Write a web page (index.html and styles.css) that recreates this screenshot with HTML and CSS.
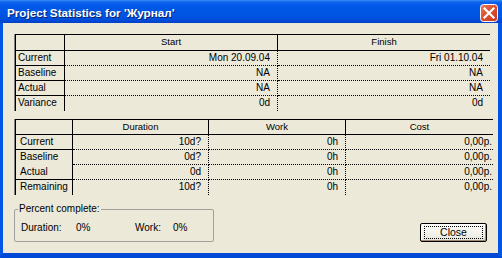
FILE: index.html
```html
<!DOCTYPE html>
<html>
<head>
<meta charset="utf-8">
<link rel="stylesheet" href="styles.css">
</head>
<body>
<div class="window">
  <div class="titlebar">
    <span class="title">Project Statistics for 'Журнал'</span>
    <span class="close">
      <svg width="18" height="18" viewBox="0 0 18 18">
        <defs>
          <linearGradient id="cg" x1="0" y1="0" x2="1" y2="1">
            <stop offset="0" stop-color="#e97a5c"/>
            <stop offset="0.5" stop-color="#df4d2c"/>
            <stop offset="1" stop-color="#c8381c"/>
          </linearGradient>
        </defs>
        <rect x="0.5" y="0.5" width="17" height="17" rx="3" fill="url(#cg)" stroke="#ffffff"/>
        <path d="M4.5 4.5 L13.5 13.5 M13.5 4.5 L4.5 13.5" stroke="#ffffff" stroke-width="2.2" stroke-linecap="square"/>
      </svg>
    </span>
  </div>
  <div class="body">
    <div class="grid t1">
      <div class="hd hsep"></div>
      <div class="hd hsep">Start</div>
      <div class="hd">Finish</div>

      <div class="lb sep">Current</div>
      <div class="v dr db">Mon 20.09.04</div>
      <div class="v db">Fri 01.10.04</div>

      <div class="lb sep">Baseline</div>
      <div class="v dr db">NA</div>
      <div class="v db">NA</div>

      <div class="lb sep">Actual</div>
      <div class="v dr db">NA</div>
      <div class="v db">NA</div>

      <div class="lb">Variance</div>
      <div class="v dr">0d</div>
      <div class="v">0d</div>
    </div>

    <div class="grid t2">
      <div class="hd hsep"></div>
      <div class="hd hsep">Duration</div>
      <div class="hd hsep">Work</div>
      <div class="hd">Cost</div>

      <div class="lb sep">Current</div>
      <div class="v dr db">10d?</div>
      <div class="v dr db">0h</div>
      <div class="v db vc">0,00р.</div>

      <div class="lb">Baseline</div>
      <div class="v dr db">0d?</div>
      <div class="v dr db">0h</div>
      <div class="v db vc">0,00р.</div>

      <div class="lb sep">Actual</div>
      <div class="v dr db">0d</div>
      <div class="v dr db">0h</div>
      <div class="v db vc">0,00р.</div>

      <div class="lb">Remaining</div>
      <div class="v dr">10d?</div>
      <div class="v dr">0h</div>
      <div class="v vc">0,00р.</div>
    </div>

    <div class="bottom">
      <fieldset class="group">
        <legend class="legend">Percent complete:</legend>
        <div class="pc">
          <span class="pc-l1">Duration:</span>
          <span class="pc-v1">0%</span>
          <span class="pc-l2">Work:</span>
          <span class="pc-v2">0%</span>
        </div>
      </fieldset>
      <div class="btn"><span class="btn-focus">Close</span></div>
    </div>
  </div>
</div>
</body>
</html>
```

FILE: styles.css
```css
* { box-sizing: border-box; }
html, body { margin: 0; padding: 0; }
body {
  width: 502px;
  height: 258px;
  overflow: hidden;
  background: #0055e5;
  font-family: "Liberation Sans", Arial, sans-serif;
  font-size: 10px;
  color: #000;
}
.window {
  width: 502px;
  height: 258px;
  display: flex;
  flex-direction: column;
}
.titlebar {
  height: 23px;
  flex: none;
  display: flex;
  align-items: center;
  justify-content: space-between;
  padding: 0 4px 0 7px;
  background: linear-gradient(#3c8ef5 0, #0f63ec 2px, #0058e8 6px, #0054e3 16px, #0049d6 21px, #003fc4 23px);
}
.title {
  color: #fff;
  font-weight: bold;
  font-size: 11.7px;
  text-shadow: 1px 1px 0 #0a246a;
  padding-top: 1px;
}
.close {
  width: 18px;
  height: 18px;
  display: block;
  margin-top: 3px;
}
.close svg { display: block; }
.body {
  flex: 1;
  background: #ece9d8;
  border-left: 3px solid #0055e5;
  border-right: 4px solid #0055e5;
  border-bottom: 5px solid #0049d6;
  padding: 11px 6px 0 12px;
  display: flex;
  flex-direction: column;
  align-items: flex-start;
}
.grid {
  display: grid;
  border-top: 1px solid #000;
  border-left: 1px solid #000;
  box-shadow: -1px 0 0 #808080;
}
.t1 {
  grid-template-columns: 49px 213px 212px;
  grid-template-rows: 16px repeat(4, 15px);
}
.t2 {
  margin-top: 8px;
  grid-template-columns: 57px 136px 137px 147px;
  grid-template-rows: 15px repeat(4, 15px);
}
.hd {
  border-bottom: 1px solid #000;
  font-size: 9.5px;
  text-align: center;
  line-height: 14px;
  white-space: nowrap;
}
.hsep { border-right: 1px solid #000; }
.lb {
  border-right: 1px solid #000;
  padding-left: 2px;
  line-height: 14px;
  white-space: nowrap;
  overflow: hidden;
}
.t2 .lb { padding-left: 4px; }
.sep { border-bottom: 1px solid #000; }
.v {
  text-align: right;
  padding-right: 7px;
  line-height: 14px;
  white-space: nowrap;
}
.vc { padding-right: 1px; }
.dr { border-right: 1px dotted #000; }
.db { border-bottom: 1px dotted #000; }
.bottom {
  align-self: stretch;
  display: flex;
  justify-content: space-between;
  align-items: flex-end;
  margin-top: 8px;
}
.group {
  margin: 0 0 0 -1px;
  width: 200px;
  height: 39px;
  border: 1px solid #a0a0a0;
  border-radius: 2px;
  padding: 0 0 0 6px;
}
.legend {
  padding: 0 1px;
  margin-left: -3px;
  line-height: 12px;
}
.pc {
  display: flex;
  padding-top: 6px;
  line-height: 13px;
}
.pc-l1 { width: 55px; }
.pc-v1 { width: 59px; }
.pc-l2 { width: 38px; }
.btn {
  width: 67px;
  height: 19px;
  margin-right: 5px;
  border: 1px solid #000;
  border-radius: 2px;
  background: linear-gradient(#fbfbf7, #f0efe7 70%, #e2dfd2);
  box-shadow: inset -1px -1px 0 #a28a6e, inset 1px 1px 0 #fff;
  padding: 2px 3px;
}
.btn-focus {
  display: block;
  height: 13px;
  border: 1px dotted #000;
  text-align: center;
  line-height: 11px;
  font-size: 10.5px;
}
```
